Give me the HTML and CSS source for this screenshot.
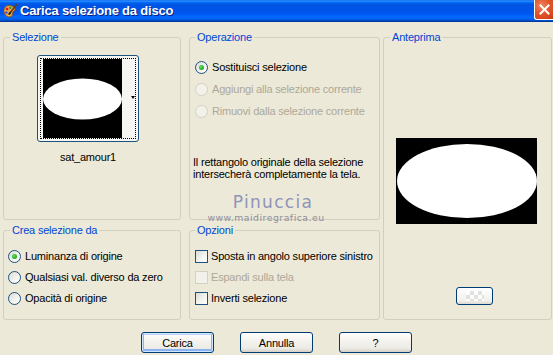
FILE: index.html
```html
<!DOCTYPE html>
<html lang="it">
<head>
<meta charset="utf-8">
<title>Carica selezione da disco</title>
<link rel="stylesheet" href="styles.css">
</head>
<body>
<div class="window">
  <header class="titlebar">
    <svg class="app-icon" width="16" height="16" viewBox="0 0 16 16">
      <path d="M2 9 C1 4 6 1 10 3 C13 4 14 7 12 8 C10 9 11 11 10 13 C8 15 3 14 2 9 Z" fill="#E9A04A" stroke="#8A4A14" stroke-width="0.8"/>
      <circle cx="5" cy="6" r="1.3" fill="#D21E1E"/>
      <circle cx="8.2" cy="4.8" r="1.2" fill="#2D9A2D"/>
      <circle cx="4.4" cy="9.6" r="1.2" fill="#2750D8"/>
      <circle cx="7" cy="12" r="1.1" fill="#F4E23A"/>
      <path d="M15 1 L8 10" stroke="#6B3A10" stroke-width="1.6"/>
      <path d="M8.5 9.2 L6.8 11.8" stroke="#222" stroke-width="2"/>
    </svg>
    <span class="title">Carica selezione da disco</span>
    <span class="close">
      <svg width="11" height="11" viewBox="0 0 11 11"><path d="M1.5 1.5 L9.5 9.5 M9.5 1.5 L1.5 9.5" stroke="#fff" stroke-width="2" stroke-linecap="square"/></svg>
    </span>
  </header>

  <main class="client">
    <div class="groups">
      <section class="group g-sel">
        <span class="legend">Selezione</span>
        <div class="thumb">
          <div class="thumb-inner">
            <svg class="thumb-img" width="79" height="79" viewBox="0 0 79 79">
              <rect width="79" height="79" fill="#000"/>
              <ellipse cx="39.5" cy="40" rx="39.5" ry="20.5" fill="#fff"/>
            </svg>
            <span class="drop-arrow"></span>
          </div>
        </div>
        <div class="thumb-name">sat_amour1</div>
      </section>

      <section class="group g-op">
        <span class="legend">Operazione</span>
        <div class="opt-list">
          <div class="opt"><span class="radio checked"></span><span>Sostituisci selezione</span></div>
          <div class="opt disabled"><span class="radio"></span><span>Aggiungi alla selezione corrente</span></div>
          <div class="opt disabled"><span class="radio"></span><span>Rimuovi dalla selezione corrente</span></div>
        </div>
        <p class="note">Il rettangolo originale della selezione<br>intersecherà completamente la tela.</p>
      </section>

      <section class="group g-prev">
        <span class="legend">Anteprima</span>
        <svg class="preview-img" width="141" height="86" viewBox="0 0 141 86">
          <rect width="141" height="86" fill="#000"/>
          <ellipse cx="71" cy="43" rx="70" ry="37" fill="#fff"/>
        </svg>
        <button class="mini-btn" type="button"><span class="checker"></span></button>
      </section>

      <section class="group g-crea">
        <span class="legend">Crea selezione da</span>
        <div class="opt-list">
          <div class="opt"><span class="radio checked"></span><span>Luminanza di origine</span></div>
          <div class="opt"><span class="radio"></span><span>Qualsiasi val. diverso da zero</span></div>
          <div class="opt"><span class="radio"></span><span>Opacità di origine</span></div>
        </div>
      </section>

      <section class="group g-opz">
        <span class="legend">Opzioni</span>
        <div class="opt-list">
          <div class="opt chk"><span class="check"></span><span>Sposta in angolo superiore sinistro</span></div>
          <div class="opt chk disabled"><span class="check"></span><span>Espandi sulla tela</span></div>
          <div class="opt chk"><span class="check"></span><span>Inverti selezione</span></div>
        </div>
      </section>
    </div>

    <div class="buttons">
      <button class="btn default" type="button">Carica</button>
      <button class="btn" type="button">Annulla</button>
      <button class="btn" type="button">?</button>
    </div>

    <div class="watermark">
      <span class="wm-name">Pinuccia</span>
      <span class="wm-url">www.maidiregrafica.eu</span>
    </div>
  </main>
</div>
</body>
</html>
```

FILE: styles.css
```css
* { box-sizing: border-box; }

html, body {
  margin: 0;
  padding: 0;
  background: #ECE9D8;
}

body {
  font-family: "Liberation Sans", Arial, sans-serif;
  font-size: 11px;
  letter-spacing: -0.2px;
  color: #000;
}

.window {
  position: relative;
  width: 553px;
  height: 355px;
  overflow: hidden;
  background: #ECE9D8;
}

/* ---------- title bar ---------- */
.titlebar {
  height: 22px;
  display: flex;
  align-items: flex-start;
  padding-left: 2px;
  background: linear-gradient(to bottom,
    #0058EE 0%, #3593FF 4%, #288EFF 6%, #127DFF 8%, #036FFC 10%,
    #0262EE 14%, #0057E5 20%, #0054E3 24%, #0055EB 56%, #005BF5 66%,
    #026AFE 76%, #0062EF 86%, #0052D6 92%, #0040AB 96%, #003092 100%);
}

.app-icon {
  margin-top: 3px;
  flex: none;
}

.title {
  margin-left: 2px;
  margin-top: 3px;
  font-family: "Liberation Sans", Arial, sans-serif;
  font-weight: bold;
  font-size: 13px;
  letter-spacing: -0.2px;
  line-height: 15px;
  color: #fff;
  text-shadow: 1px 1px 0 #0A1F84;
}

.close {
  margin-left: auto;
  margin-top: 0;
  width: 19px;
  height: 20px;
  display: flex;
  align-items: center;
  justify-content: center;
  border: 1px solid #fff;
  border-right: none;
  border-top: none;
  border-radius: 0 0 0 3px;
  background: radial-gradient(circle at 35% 30%, #F0845E 0%, #E2572C 45%, #CC3A12 100%);
}

/* ---------- client area ---------- */
.client {
  position: relative;
  padding: 15px 1px 0 3px;
}

.groups {
  display: grid;
  grid-template-columns: 178px 8px 191px 3px 169px;
  grid-template-rows: 183px 10px 90px;
}

.group {
  position: relative;
  border: 1px solid #D0D0BF;
  border-radius: 3px;
}

.legend {
  position: absolute;
  top: -6px;
  left: 6px;
  padding: 0 2px;
  line-height: 11px;
  background: #ECE9D8;
  color: #0046D5;
  white-space: nowrap;
}

.g-sel  { grid-column: 1; grid-row: 1; padding: 17px 0 0 33px; }
.g-op   { grid-column: 3; grid-row: 1; padding: 23px 0 0 5px; }
.g-prev { grid-column: 5; grid-row: 1 / 4; padding: 100px 0 0 12px; display: flex; flex-direction: column; align-items: flex-start; }
.g-crea { grid-column: 1; grid-row: 3; padding: 19px 0 0 4px; }
.g-opz  { grid-column: 3; grid-row: 3; padding: 19px 0 0 5px; }

.g-op .legend, .g-opz .legend { left: 5px; }

/* ---------- Selezione thumbnail ---------- */
.thumb {
  width: 102px;
  height: 87px;
  padding: 2px;
  border: 1px solid #1C5180;
  border-radius: 3px;
  background: #F6F5F1;
}

.thumb-inner {
  position: relative;
  height: 100%;
  border: 1px dotted #000;
  padding-left: 2px;
  display: flex;
  align-items: stretch;
}

.thumb-img { display: block; flex: none; }

.drop-arrow {
  position: absolute;
  right: 0;
  top: 37px;
  width: 0;
  height: 0;
  border-left: 2.5px solid transparent;
  border-right: 2.5px solid transparent;
  border-top: 3px solid #000;
}

.thumb-name {
  width: 102px;
  margin-top: 9px;
  text-align: center;
  line-height: 13px;
}

/* ---------- options ---------- */
.opt-list {
  display: flex;
  flex-direction: column;
  gap: 9px;
}

.g-crea .opt-list, .g-opz .opt-list { gap: 8px; }

.opt {
  display: flex;
  align-items: center;
  height: 13px;
  gap: 4px;
  white-space: nowrap;
  line-height: 13px;
}

.opt.chk { gap: 3px; }

.opt.disabled { color: #ACA899; }

.radio {
  position: relative;
  flex: none;
  width: 13px;
  height: 13px;
  border-radius: 50%;
  border: 1px solid #1C5180;
  background: linear-gradient(135deg, #DCDCD7 0%, #F4F4F0 60%, #FFFFFF 100%);
}

.radio.checked::after {
  content: "";
  position: absolute;
  left: 3px;
  top: 3px;
  width: 5px;
  height: 5px;
  border-radius: 50%;
  background: radial-gradient(circle at 40% 40%, #6CE06C 0%, #2BB52B 50%, #1C8F1C 100%);
}

.opt.disabled .radio,
.opt.disabled .check {
  border-color: #D4D1C3;
  background: #F2F1EA;
}

.check {
  flex: none;
  width: 13px;
  height: 13px;
  border: 1px solid #1C5180;
  background: linear-gradient(135deg, #DCDCD7 0%, #F4F4F0 60%, #FFFFFF 100%);
}

.note {
  margin: 38px 0 0 -2px;
  line-height: 12px;
}

/* ---------- preview ---------- */
.preview-img { display: block; }

.mini-btn {
  margin: 63px 0 0 60px;
  width: 37px;
  height: 18px;
  padding: 0;
  border: 1px solid #003C74;
  border-radius: 3px;
  background: linear-gradient(#FFFFFF, #F1F0EC 80%, #DCD8CE);
  display: flex;
  align-items: center;
  justify-content: center;
}

.checker {
  width: 18px;
  height: 10px;
  background-color: #FFFFFF;
  background-image:
    linear-gradient(45deg, #DDDDDD 25%, transparent 25%, transparent 75%, #DDDDDD 75%),
    linear-gradient(45deg, #DDDDDD 25%, transparent 25%, transparent 75%, #DDDDDD 75%);
  background-size: 8px 8px;
  background-position: 0 0, 4px 4px;
  opacity: 0.8;
}

/* ---------- buttons ---------- */
.buttons {
  display: flex;
  justify-content: center;
  gap: 26px;
  margin-top: 12px;
  padding-right: 2px;
}

.btn {
  width: 73px;
  height: 21px;
  padding: 0;
  font-family: "Liberation Sans", Arial, sans-serif;
  font-size: 11px;
  letter-spacing: -0.2px;
  color: #000;
  border: 1px solid #003C74;
  border-radius: 3px;
  background: linear-gradient(#FFFFFF 0%, #F4F3EF 40%, #ECEBE6 80%, #D6D0C5 100%);
}

.btn.default {
  box-shadow: inset 0 0 0 1px #CEE7FF, inset 0 -1px 0 2px #8CB4F2, inset 0 1px 0 1px #B9D1FA;
}

/* ---------- watermark ---------- */
.watermark {
  position: absolute;
  left: 200px;
  top: 171px;
  width: 132px;
  display: flex;
  flex-direction: column;
  align-items: center;
  pointer-events: none;
  white-space: nowrap;
}

.wm-name {
  margin-left: 14px;
  font-family: "DejaVu Sans", sans-serif;
  font-size: 17px;
  letter-spacing: 1.3px;
  line-height: 19px;
  color: #8F94B8;
}

.wm-url {
  font-family: "DejaVu Sans", sans-serif;
  font-size: 9.3px;
  letter-spacing: 0.5px;
  line-height: 10px;
  color: #8E8E9C;
  margin-top: 1px;
}
```
